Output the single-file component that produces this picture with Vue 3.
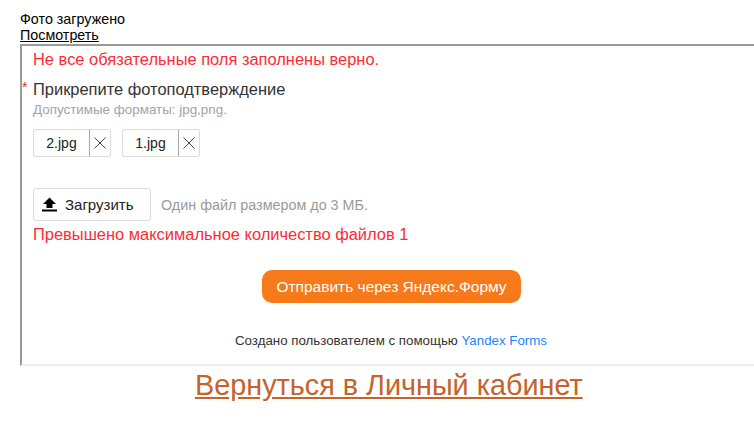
<template>
  <div class="page">
    <div class="status">
      <div>Фото загружено</div>
      <a class="view-link">Посмотреть</a>
    </div>
    <div class="frame">
      <div class="form-error">Не все обязательные поля заполнены верно.</div>
      <div class="question">
        <span class="star">*</span>
        <div class="q-label">Прикрепите фотоподтверждение</div>
        <div class="q-hint">Допустимые форматы: jpg,png.</div>
      </div>
      <div class="files">
        <div class="file" v-for="name in files" :key="name">
          <span class="file-name">{{ name }}</span>
          <span class="file-remove">
            <svg width="12" height="12" viewBox="0 0 12 12">
              <path d="M0.5 0.5 L11.5 11.5 M11.5 0.5 L0.5 11.5" stroke="#444" stroke-width="1" fill="none" />
            </svg>
          </span>
        </div>
      </div>
      <div class="upload-row">
        <div class="upload-btn">
          <svg width="15" height="15" viewBox="0 0 15 15">
            <path d="M7.5 0.5 L14 7 H10.5 V11 H4.5 V7 H1 Z M0 12.5 H15 V14.5 H0 Z" fill="#000" />
          </svg>
          <span>Загрузить</span>
        </div>
        <span class="upload-note">Один файл размером до 3 МБ.</span>
      </div>
      <div class="file-error">Превышено максимальное количество файлов 1</div>
      <div class="submit-row">
        <div class="submit-btn">Отправить через Яндекс.Форму</div>
      </div>
      <div class="credit">Создано пользователем с помощью <span class="credit-link">Yandex Forms</span></div>
    </div>
    <div class="back">
      <a class="back-link">Вернуться в Личный кабинет</a>
    </div>
  </div>
</template>

<script setup>
const files = ['2.jpg', '1.jpg'];
</script>

<style>
body {
  margin: 0;
  background: #fff;
}
</style>

<style scoped>
.page {
  width: 754px;
  height: 440px;
  overflow: hidden;
  font-family: "Liberation Sans", Arial, sans-serif;
  box-sizing: border-box;
  padding: 11px 0 0 20px;
}

.status {
  font-size: 14.3px;
  line-height: 16px;
  color: #000;
  height: 33px;
}

.view-link {
  color: #000;
  text-decoration: underline;
}

.frame {
  box-sizing: border-box;
  width: 734px;
  height: 322px;
  border-top: 2px solid #9a9a9a;
  border-left: 2px solid #9a9a9a;
  border-bottom: 2px solid #eeeeee;
  padding: 4px 0 0 11px;
}

.form-error {
  font-size: 16.44px;
  line-height: 18px;
  color: #ff2a35;
}

.question {
  position: relative;
  margin-top: 12px;
}

.star {
  position: absolute;
  left: -11px;
  top: -1px;
  color: #e0313b;
  font-size: 14px;
  line-height: 16px;
}

.q-label {
  font-size: 16.45px;
  line-height: 18px;
  color: #333;
}

.q-hint {
  font-size: 13.4px;
  line-height: 14px;
  margin-top: 5px;
  color: #a3a3a3;
}

.files {
  display: flex;
  gap: 11px;
  margin-top: 12px;
}

.file {
  display: flex;
  height: 28px;
  box-sizing: border-box;
}

.file-name {
  box-sizing: border-box;
  width: 56px;
  border: 1px solid #dcdcdc;
  border-right: none;
  border-radius: 3px 0 0 3px;
  font-size: 14px;
  line-height: 26px;
  text-align: center;
  color: #222;
}

.file-remove {
  box-sizing: border-box;
  width: 22px;
  border: 1px solid #dcdcdc;
  border-left: 1px solid #a8a8a8;
  border-radius: 0 3px 3px 0;
  display: flex;
  align-items: center;
  justify-content: center;
}

.upload-row {
  display: flex;
  align-items: center;
  margin-top: 31px;
}

.upload-btn {
  box-sizing: border-box;
  width: 118px;
  height: 33px;
  border: 1px solid #dcdcdc;
  border-radius: 3px;
  display: flex;
  align-items: center;
  padding-left: 8px;
  gap: 8px;
  font-size: 15px;
  color: #222;
}

.upload-note {
  margin-left: 10px;
  font-size: 14.35px;
  color: #9a9a9a;
}

.file-error {
  margin-top: 4px;
  font-size: 16.44px;
  line-height: 18px;
  color: #ff2a35;
}

.submit-row {
  display: flex;
  margin-top: 27px;
  padding-left: 229px;
}

.submit-btn {
  box-sizing: border-box;
  width: 259px;
  height: 33px;
  border-radius: 10px;
  background: #f67a1a;
  color: #fff;
  font-size: 15.5px;
  line-height: 33px;
  text-align: center;
}

.credit {
  margin-top: 31px;
  padding-left: 202px;
  font-size: 13.3px;
  line-height: 14px;
  color: #333;
}

.credit-link {
  color: #1a85ff;
}

.back {
  padding-left: 175px;
  padding-top: 2px;
  line-height: 34px;
}

.back-link {
  font-size: 28.8px;
  color: #c5632b;
  text-decoration: underline;
}
</style>
